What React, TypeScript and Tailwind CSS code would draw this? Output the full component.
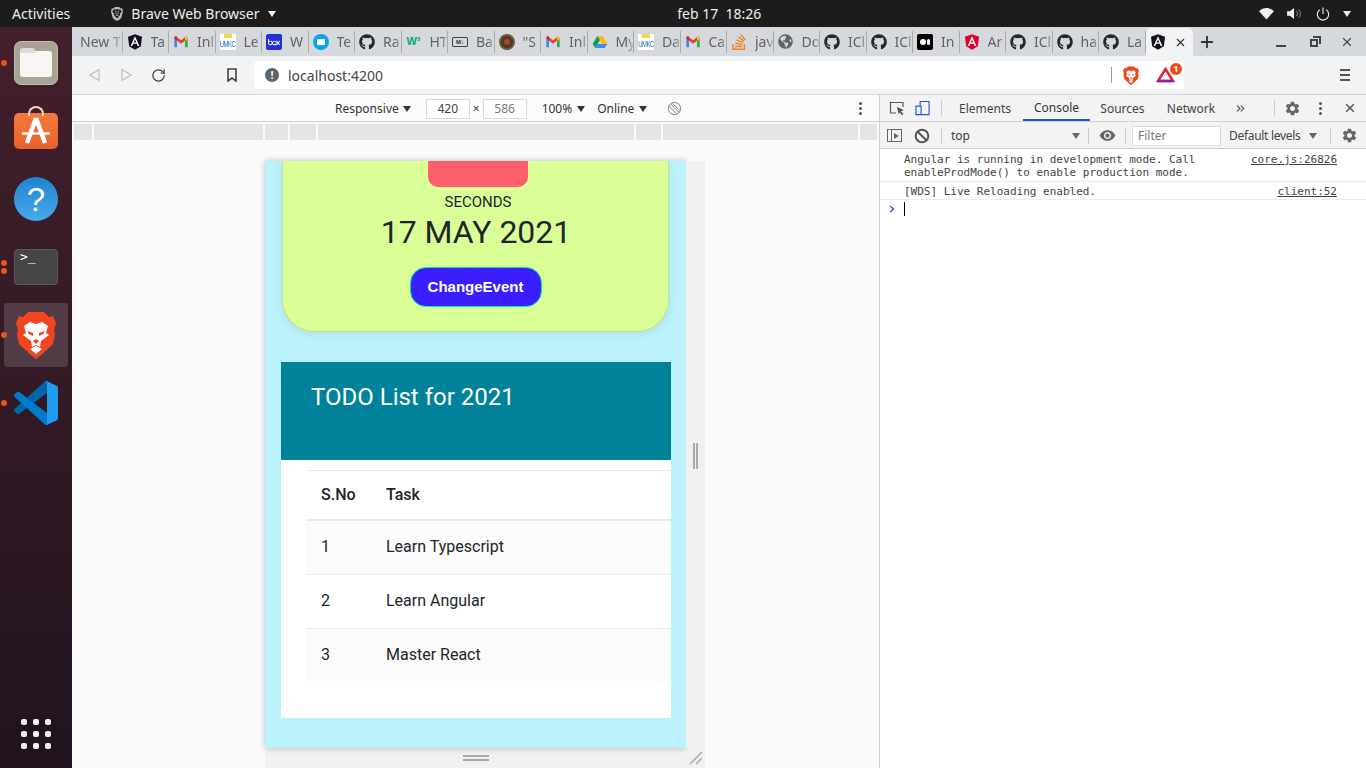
import type { ReactNode } from 'react';
import { FaGithub, FaGlobeAmericas } from 'react-icons/fa';
import { MdSettings, MdRemoveRedEye } from 'react-icons/md';
import { SiBrave, SiStackoverflow, SiBox } from 'react-icons/si';
import { ChevronsRight, Plus, RotateCw, X } from 'lucide-react';

const Caret = ({ className = 'border-t-[#333]' }: { className?: string }) => (
    <span className={`inline-block w-0 h-0 border-x-[4px] border-x-transparent border-t-[6px] ${className}`} />
);

const AngularIcon = ({ red = false }: { red?: boolean }) => (
    <svg viewBox="0 0 24 24" className="w-4 h-4">
        <path d="M12 0.5 1.5 4.2 3.2 18.2 12 23.5 20.8 18.2 22.5 4.2Z" fill={red ? '#dd0031' : '#11131c'} />
        <path d="M12 3.5 5.4 18h2.5l1.3-3.2h5.6l1.3 3.2h2.5ZM13.9 12.8h-3.8L12 8.3Z" fill="#fff" />
    </svg>
);

const GmailIcon = () => (
    <svg viewBox="0 0 24 24" className="w-4 h-4">
        <path d="M2 20h4V10L2 7Z" fill="#4285f4" />
        <path d="M18 20h4V7l-4 3Z" fill="#34a853" />
        <path d="M18 5v5l4-3V5.5C22 3.5 19.8 2.5 18 4Z" fill="#fbbc04" />
        <path d="M6 10V5l6 4.5L18 5v5l-6 4.5Z" fill="#ea4335" />
        <path d="M2 5.5V7l4 3V4C4.200 2.500 2 3.500 2 5.500Z" fill="#c5221f" />
    </svg>
);

const UmkcIcon = () => (
    <div className="w-4 h-4 bg-white flex items-end justify-center relative">
        <span className="absolute top-0 left-1 w-2 h-1 bg-[#f3d64e]" />
        <span className="text-[6px] leading-[8px] tracking-[-0.5px] scale-y-150 origin-bottom text-[#2a6fd0] font-['Liberation_Sans',sans-serif]">UMKC</span>
    </div>
);

const DriveIcon = () => (
    <svg viewBox="0 0 24 24" className="w-4 h-4">
        <path d="M8 3h8l7 12h-8Z" fill="#fbbc04" />
        <path d="M8 3 1 15l4 6 7-12Z" fill="#0f9d58" />
        <path d="M5 21h14l4-6H9Z" fill="#4285f4" />
    </svg>
);

const GithubTabIcon = () => <FaGithub className="w-4 h-4 text-[#24292e]" />;

const tabs: { icon: ReactNode; label: string }[] = [
    { icon: null, label: 'New T' },
    { icon: <AngularIcon />, label: 'Ta' },
    { icon: <GmailIcon />, label: 'Inl' },
    { icon: <UmkcIcon />, label: 'Le' },
    { icon: <div className="w-4 h-4 rounded-[2px] bg-[#2230d8] flex items-center justify-center"><SiBox className="text-white w-3 h-3" /></div>, label: 'W' },
    { icon: <div className="w-4 h-4 rounded-full bg-[#0ca3e8] flex items-center justify-center"><div className="w-2 h-[6px] bg-white rounded-[1px]" /></div>, label: 'Te' },
    { icon: <GithubTabIcon />, label: 'Ra' },
    { icon: <span className="text-[11px] font-bold leading-none text-[#04aa6d] font-['Liberation_Sans',sans-serif]">W³</span>, label: 'HT' },
    { icon: <div className="w-4 h-[10px] border border-[#444] rounded-[1px] flex items-center justify-center text-[6px] font-bold leading-none text-[#333] font-['Liberation_Sans',sans-serif]">M↓</div>, label: 'Ba' },
    { icon: <div className="w-4 h-4 rounded-full bg-[#4b3a22] border-2 border-[#6a5a35] flex items-center justify-center"><div className="w-[6px] h-[6px] rounded-full bg-[#b04030]" /></div>, label: '"S' },
    { icon: <GmailIcon />, label: 'Inl' },
    { icon: <DriveIcon />, label: 'My' },
    { icon: <UmkcIcon />, label: 'Da' },
    { icon: <GmailIcon />, label: 'Ca' },
    { icon: <SiStackoverflow className="w-4 h-4 text-[#f48024]" />, label: 'jav' },
    { icon: <FaGlobeAmericas className="w-[15px] h-[15px] text-[#5f6368]" />, label: 'Do' },
    { icon: <GithubTabIcon />, label: 'ICl' },
    { icon: <GithubTabIcon />, label: 'ICl' },
    { icon: <div className="w-4 h-4 bg-black rounded-[2px] flex items-center justify-center gap-[1px]"><span className="w-[6px] h-[6px] rounded-full bg-white" /><span className="w-[3px] h-[6px] rounded-full bg-white" /></div>, label: 'In' },
    { icon: <AngularIcon red />, label: 'Ar' },
    { icon: <GithubTabIcon />, label: 'ICl' },
    { icon: <GithubTabIcon />, label: 'ha' },
    { icon: <GithubTabIcon />, label: 'La' },
];

const BraveLogo = ({ className }: { className: string }) => (
    <svg viewBox="0 0 40 48" className={className}>
        <path d="M12 1H28L33 6 37 5 40 12 38 19 39 23 37 33 25 44 20 48 15 44 3 33 1 23 2 19 0 12 3 5 7 6Z" fill="#f1451f" />
        <path d="M8 15 14 11 20 13 26 11 32 15 30 22 33 24 25 30 24 36 20 34 16 36 15 30 7 24 10 22Z" fill="#fff" />
        <path d="M14 38 20 35 26 38 20 43Z" fill="#fff" />
        <path d="M11 20 17 22 17 25 13 23ZM29 20 23 22 23 25 27 23ZM17 30 20 28 23 30 20 33Z" fill="#f1451f" />
    </svg>
);

const FilesIcon = () => (
    <div className="w-11 h-11 rounded-[7px] bg-[#a8a395] border border-[#c2bdb0] flex items-center justify-center">
        <div className="relative w-8 h-[26px] mt-[1px] bg-[#f7f6f4] rounded-[3px]">
            <div className="absolute -top-[3px] left-0 w-[15px] h-[5px] bg-[#dedbd4] rounded-t-[3px]" />
        </div>
    </div>
);

const StoreIcon = () => (
    <div className="relative w-11 h-[36px] rounded-[5px] bg-gradient-to-b from-[#f47a3c] to-[#e8602a] flex items-center justify-center">
        <div className="absolute -top-[7px] left-[14px] w-4 h-[10px] border-2 border-b-0 border-[#f0d9b8] rounded-t-full" />
        <svg viewBox="0 0 44 36" className="w-11 h-9">
            <path d="M22 5 13 30M22 5l9 25" stroke="#fff" strokeWidth="4.500" fill="none" />
            <path d="M8 20.500h28" stroke="#fff" strokeWidth="2.500" />
        </svg>
    </div>
);

const HelpIcon = () => (
    <div className="w-11 h-11 rounded-full bg-gradient-to-b from-[#1f83d2] to-[#48aae8] flex items-center justify-center text-white text-[33px] leading-none font-['Liberation_Sans',sans-serif]">
        ?
    </div>
);

const TerminalIcon = () => (
    <div className="w-11 h-9 rounded-[4px] bg-[#454545] border border-[#5a5a5a] px-[5px] text-[13px] leading-[14px] text-white font-['DejaVu_Sans_Mono',monospace]">
        &gt;_
    </div>
);

const VsCodeIcon = () => (
    <svg viewBox="0 0 100 100" className="w-11 h-11">
        <path d="M96.400 10.800 75.900.900c-2.400-1.200-5.200-.700-7.100 1.200L1.400 63.500c-1.800 1.600-1.800 4.400 0 6l5.500 5c1.500 1.300 3.700 1.400 5.300.200L93.200 13.100c2.700-2 6.600-.100 6.600 3.300v-.200c0-2.400-1.400-4.500-3.400-5.400Z" fill="#0065a9" />
        <path d="M96.400 89.200 75.900 99.100c-2.400 1.200-5.200.700-7.100-1.200L1.400 36.300c-1.800-1.600-1.800-4.400 0-6l5.500-5c1.500-1.300 3.700-1.400 5.300-.200L93.200 86.900c2.700 2 6.600.100 6.600-3.300v.200c0 2.400-1.400 4.500-3.400 5.400Z" fill="#007acc" />
        <path d="M75.900 99.100c-2.400 1.200-5.200.700-7.100-1.200 2.300 2.300 6.200.700 6.200-2.600V4.700c0-3.300-3.900-4.900-6.200-2.600 1.900-1.900 4.700-2.400 7.100-1.200l20.500 9.900c2.200 1 3.600 3.100 3.600 5.500v67.800c0 2.400-1.400 4.500-3.600 5.500Z" fill="#1f9cf0" />
    </svg>
);

const dockItems: { icon: ReactNode; dots?: number; active?: boolean }[] = [
    { icon: <FilesIcon />, dots: 1 },
    { icon: <StoreIcon /> },
    { icon: <HelpIcon /> },
    { icon: <TerminalIcon />, dots: 2 },
    { icon: <BraveLogo className="w-10 h-12" />, dots: 1, active: true },
    { icon: <VsCodeIcon />, dots: 1 },
];

const Dock = () => (
    <aside className="w-[72px] shrink-0 flex flex-col items-center px-1 pt-[4px] pb-[19px] gap-1 bg-gradient-to-b from-[#431f2b] to-[#21141f]">
        {dockItems.map((item, i) => (
            <div key={i} className={`relative w-16 h-16 shrink-0 rounded-[3px] flex items-center justify-center ${item.active ? 'bg-white/15' : ''}`}>
                {item.dots && (
                    <div className="absolute -left-[3px] top-0 h-full flex flex-col justify-center gap-[2px]">
                        {Array.from({ length: item.dots }).map((_, d) => (
                            <span key={d} className="w-[6px] h-[6px] rounded-full bg-[#e95420]" />
                        ))}
                    </div>
                )}
                {item.icon}
            </div>
        ))}
        <div className="mt-auto grid grid-cols-3 gap-[6px]">
            {Array.from({ length: 9 }).map((_, i) => (
                <span key={i} className="w-[6px] h-[6px] rounded-[2px] bg-[#f2f2f2]" />
            ))}
        </div>
    </aside>
);

const TopBar = () => (
    <header className="h-[27px] shrink-0 bg-[#1c1c1c] flex items-center text-[14px] text-[#eeeeec] pl-3 pr-[15px]">
        <span>Activities</span>
        <div className="ml-[40px] flex items-center gap-[7px]">
            <SiBrave className="w-[14px] h-4 text-[#b9b9b9]" />
            <span>Brave Web Browser</span>
            <Caret className="border-t-[#eeeeec] ml-[1px]" />
        </div>
        <span className="mx-auto pr-[96px]">feb 17&nbsp; 18:26</span>
        <div className="flex items-center">
            <svg viewBox="0 0 16 14" className="w-[15px] h-[13px]"><path d="M0 4.500C4.500 0 11.500 0 16 4.500L8 13.500Z" fill="#eeeeec" /></svg>
            <svg viewBox="0 0 16 14" className="ml-[13px] w-[15px] h-[13px]">
                <path d="M0 4.500h3L7.500 1V13L3 9.500H0Z" fill="#eeeeec" />
                <path d="M10 4c1.500 1.500 1.500 4.500 0 6M12.500 2.500c2.500 2.500 2.500 6.500 0 9" stroke="#999" fill="none" />
            </svg>
            <svg viewBox="0 0 16 16" className="w-[14px] h-[14px] ml-[14px]">
                <path d="M4.500 3a6.500 6.500 0 1 0 7 0M8 .5V8" stroke="#eeeeec" strokeWidth="1.300" fill="none" />
            </svg>
            <Caret className="border-t-[#eeeeec] ml-[13px]" />
        </div>
    </header>
);

const TabStrip = () => (
    <div className="h-[29px] shrink-0 bg-[#d5d8dc] flex items-stretch pl-1 text-[14px] text-[#5f6368]">
        {tabs.map((tab, i) => (
            <div key={i} className="w-[46.5px] shrink-0 h-[22px] my-auto border-r border-[#a8abb0] pl-[4px] flex items-center gap-[8px] overflow-hidden whitespace-nowrap">
                {tab.icon && <span className="shrink-0 w-4 flex items-center justify-center">{tab.icon}</span>}
                <span className="flex-1 min-w-0 [mask-image:linear-gradient(to_right,#000_65%,rgba(0,0,0,0.25))]">{tab.label}</span>
            </div>
        ))}
        <div className="w-[47px] shrink-0 mt-[1px] bg-[#f2f3f5] rounded-t-[5px] flex items-center pl-[4px] gap-[8px]">
            <AngularIcon />
            <X className="w-[13px] h-[13px] text-[#333]" strokeWidth={2} />
        </div>
        <Plus className="w-[18px] h-[18px] ml-[5px] self-center text-[#333]" strokeWidth={2.500} />
        <div className="ml-auto pr-[12px] flex items-center text-[#444]">
            <span className="w-[10px] h-[2px] bg-[#444] mt-[8px]" />
            <span className="relative ml-[24px] w-[8px] h-[8px] mt-[2px] border-2 border-[#444]">
                <span className="absolute -top-[5px] -right-[5px] w-[8px] h-[8px] border-t-2 border-r-2 border-[#444]" />
            </span>
            <X className="ml-[22px] w-[14px] h-[14px]" strokeWidth={2} />
        </div>
    </div>
);

const AddressBar = () => (
    <div className="h-[39px] shrink-0 bg-[#f2f3f4] border-b border-[#d4d4d4] flex items-start pt-[5px]">
        <div className="w-[182px] h-7 shrink-0 flex items-center pl-[17px]">
            <svg viewBox="0 0 12 14" className="w-[11px] h-[14px]"><path d="M11 1 1 7l10 6Z" fill="none" stroke="#bcbfc3" strokeWidth="1.300" /></svg>
            <svg viewBox="0 0 12 14" className="w-[11px] h-[14px] ml-[21px]"><path d="M1 1l10 6-10 6Z" fill="none" stroke="#bcbfc3" strokeWidth="1.300" /></svg>
            <RotateCw className="w-[15px] h-[15px] ml-[19px] text-[#444]" strokeWidth={2} />
            <svg viewBox="0 0 10 14" className="w-[10px] h-[14px] ml-[61px]"><path d="M1 1h8v12L5 10l-4 3Z" fill="none" stroke="#444" strokeWidth="1.600" /></svg>
        </div>
        <div className="w-[930px] h-7 shrink-0 bg-white rounded-[4px] flex items-center pl-[11px] pr-[9px]">
            <span className="w-[14px] h-[14px] rounded-full bg-[#5f6368] text-white text-[11px] font-bold leading-[14px] text-center font-['Liberation_Sans',sans-serif]">!</span>
            <span className="ml-[9px] text-[14px] text-[#444]">localhost:4200</span>
            <span className="ml-auto w-px h-4 bg-[#999]" />
            <BraveLogo className="w-4 h-[19px] ml-[11px]" />
            <div className="relative ml-[17px] w-[19px] h-[16px]">
                <svg viewBox="0 0 19 16" className="w-[19px] h-[16px]">
                    <path d="M9.500 2 17 14H2Z" fill="none" stroke="#e0243a" strokeWidth="2.500" />
                    <path d="M2 14H17" stroke="#8b1f9e" strokeWidth="2.500" />
                </svg>
                <span className="absolute -top-[4px] -right-[7px] w-3 h-3 rounded-full bg-[#ec4b1b] text-white text-[8px] leading-3 text-center font-bold">1</span>
            </div>
        </div>
        <div className="ml-auto pr-[16px] pt-[8px] flex flex-col gap-[3px]">
            <span className="w-[10px] h-[2px] bg-[#555]" />
            <span className="w-[10px] h-[2px] bg-[#555]" />
            <span className="w-[10px] h-[2px] bg-[#555]" />
        </div>
    </div>
);

const DeviceToolbar = () => (
    <div className="h-[27px] shrink-0 bg-[#fbfbfb] border-b border-[#cfcfcf] flex items-center pl-[263px] pt-[1px] text-[12px] text-[#333]">
        <span>Responsive</span>
        <Caret className="ml-[4px] border-t-[#333]" />
        <span className="ml-[15px] w-[44px] h-[20px] border border-[#dadada] bg-white text-center leading-[18px] text-[#444]">420</span>
        <span className="mx-[3px] text-[#444]">×</span>
        <span className="w-[44px] h-[20px] border border-[#dadada] bg-white text-center leading-[18px] text-[#777]">586</span>
        <span className="ml-[15px]">100%</span>
        <Caret className="ml-[5px] border-t-[#333]" />
        <span className="ml-[12px]">Online</span>
        <Caret className="ml-[5px] border-t-[#333]" />
        <svg viewBox="0 0 16 16" className="ml-[20px] w-[15px] h-[15px]">
            <circle cx="8" cy="8" r="6.500" fill="none" stroke="#777" />
            <path d="M4 3.500l8.500 8.500M2.500 6l7.500 7.500M6 2.500l7.500 7.500" stroke="#777" fill="none" />
        </svg>
        <div className="ml-auto mr-[17px] flex flex-col gap-[2px]">
            <span className="w-[3px] h-[3px] rounded-full bg-[#555]" />
            <span className="w-[3px] h-[3px] rounded-full bg-[#555]" />
            <span className="w-[3px] h-[3px] rounded-full bg-[#555]" />
        </div>
    </div>
);

const rulerWidths = [18, 169, 23, 26, 316, 25, 195, 17];

const MediaRuler = () => (
    <div className="h-[18px] shrink-0 flex gap-[2px] pl-[2px] pt-[2px] bg-[#fafafa]">
        {rulerWidths.map((w, i) => (
            <div key={i} className="h-4 bg-[#e5e5e5]" style={{ width: w }} />
        ))}
    </div>
);

const todos = ['Learn Typescript', 'Learn Angular', 'Master React'];

const CountdownCard = () => (
    <div className="mx-[17px] h-[171px] shrink-0 bg-[#d9ff96] border border-t-0 border-[#c4e08a] rounded-b-[32px] shadow-[0_2px_10px_rgba(0,0,0,0.08)] flex flex-col items-center text-[#212529] font-['Roboto',sans-serif]">
        <div className="ml-[5px] w-[100px] h-[26px] bg-[#ff5e6c] rounded-b-[10px]" />
        <div className="mt-[6px] ml-[5px] text-[15px] leading-[18px]">SECONDS</div>
        <div className="mt-[2px] ml-[1px] text-[32px] leading-[38px]">17 MAY 2021</div>
        <button className="mt-[16px] w-[132px] h-[40px] rounded-[16px] bg-[#3b1eff] border border-[#00f0a0] text-white text-[15px] font-bold font-['Liberation_Sans',sans-serif]">
            ChangeEvent
        </button>
    </div>
);

const TodoCard = () => (
    <div className="ml-[16px] mr-[15px] mt-[30px] h-[356px] shrink-0 bg-white font-['Roboto',sans-serif] text-[#212529]">
        <div className="h-[98px] bg-[#00829b] pl-[30px] pt-[20px] text-[24px] leading-[30px] text-white">TODO List for 2021</div>
        <div className="ml-[25px] mt-[10px] text-[16px]">
            <div className="h-[51px] flex items-center border-t border-b-2 border-[#e9e9e9] font-medium">
                <span className="w-[80px] pl-[15px]">S.No</span>
                <span>Task</span>
            </div>
            {todos.map((todo, i) => (
                <div key={todo} className={`flex items-center pb-[2px] ${i % 2 === 0 ? 'bg-[#fbfbfb]' : 'bg-white'} ${i < 2 ? 'h-[54px] border-b border-[#e9e9e9]' : 'h-[53px]'}`}>
                    <span className="w-[80px] pl-[15px]">{i + 1}</span>
                    <span>{todo}</span>
                </div>
            ))}
        </div>
    </div>
);

const Viewport = () => (
    <div className="flex-1 min-h-0 bg-[#fafafa] pl-[193px] pt-[21px] overflow-hidden">
        <div className="flex w-[440px]">
            <div className="w-[421px] h-[587px] shrink-0 bg-[#bbf2fb] flex flex-col shadow-[0_0_6px_rgba(0,0,0,0.25)] overflow-hidden">
                <CountdownCard />
                <TodoCard />
            </div>
            <div className="w-[19px] bg-[#f1f1f1] flex items-center justify-center gap-[1px] pt-[3px]">
                <span className="w-[2px] h-[26px] bg-[#aaa]" />
                <span className="w-[2px] h-[26px] bg-[#aaa]" />
            </div>
        </div>
        <div className="w-[440px] h-[20px] bg-[#f1f1f1] flex items-center">
            <div className="w-[421px] flex flex-col items-center gap-[2px]">
                <span className="w-[26px] h-[2px] bg-[#aaa]" />
                <span className="w-[26px] h-[2px] bg-[#aaa]" />
            </div>
            <svg viewBox="0 0 14 14" className="ml-[3px] w-[14px] h-[14px]">
                <path d="M1 13 13 1M7 13l6-6" stroke="#aaa" strokeWidth="1.500" />
            </svg>
        </div>
    </div>
);

const DevTools = () => (
    <div className="w-[487px] shrink-0 border-l border-[#cfcfcf] bg-white flex flex-col text-[12px] text-[#333]">
        <div className="h-[27px] shrink-0 bg-[#f3f3f3] border-b border-[#cfcfcf] flex items-center pl-[9px]">
            <svg viewBox="0 0 16 16" className="w-[16px] h-[16px]">
                <path d="M7 13H1.500V2.500H14V7" fill="none" stroke="#555" strokeWidth="1.200" />
                <path d="M8 7l7 3-3 1.200 2.500 2.800-1.300 1.200-2.500-2.800L9.500 14Z" fill="#555" />
            </svg>
            <svg viewBox="0 0 16 16" className="w-[15px] h-[16px] ml-[10px]">
                <path d="M5.500 5V1h9.500v14H5.500M1 6h5.500v9H1Z" fill="none" stroke="#1a56d8" strokeWidth="1.200" />
            </svg>
            <span className="ml-[11px] w-px h-4 bg-[#ccc]" />
            <div className="ml-[5px] flex h-full">
                <span className="w-[76px] pt-[1px] flex items-center justify-center text-[#444]">Elements</span>
                <span className="w-[67px] pt-[1px] flex items-center justify-center border-b-2 border-[#1a56d8] text-[#333]">Console</span>
                <span className="w-[65px] pt-[1px] flex items-center justify-center text-[#444]">Sources</span>
                <span className="w-[72px] pt-[1px] flex items-center justify-center text-[#444]">Network</span>
            </div>
            <ChevronsRight className="ml-[7px] w-[13px] h-[13px] text-[#555]" />
            <span className="ml-[27px] w-px h-4 bg-[#ccc]" />
            <MdSettings className="ml-[9px] w-[17px] h-[17px] text-[#666]" />
            <div className="ml-[18px] flex flex-col gap-[2px]">
                <span className="w-[3px] h-[3px] rounded-full bg-[#555]" />
                <span className="w-[3px] h-[3px] rounded-full bg-[#555]" />
                <span className="w-[3px] h-[3px] rounded-full bg-[#555]" />
            </div>
            <X className="ml-[21px] w-[14px] h-[14px] text-[#555]" strokeWidth={2.500} />
        </div>
        <div className="h-[27px] shrink-0 bg-[#f3f3f3] border-b border-[#cfcfcf] flex items-center pl-[7px] pt-[1px]">
            <div className="w-[15px] h-[13px] border border-[#666] flex items-center">
                <span className="w-[4px] h-full border-r border-[#666]" />
                <span className="ml-[2px] w-0 h-0 border-y-[3.500px] border-y-transparent border-l-[5px] border-l-[#666]" />
            </div>
            <svg viewBox="0 0 16 16" className="ml-[12px] w-4 h-4">
                <circle cx="8" cy="8" r="6.300" fill="none" stroke="#555" strokeWidth="2" />
                <path d="M3.500 3.500l9 9" stroke="#555" strokeWidth="2" />
            </svg>
            <span className="ml-[11px] w-px h-4 bg-[#ccc]" />
            <span className="ml-[9px] w-[121px] text-[#444]">top</span>
            <Caret className="border-t-[#666]" />
            <span className="ml-[8px] w-px h-4 bg-[#ccc]" />
            <MdRemoveRedEye className="ml-[10px] w-[17px] h-[17px] text-[#666]" />
            <span className="ml-[9px] w-px h-4 bg-[#ccc]" />
            <span className="ml-[6px] w-[89px] h-[20px] bg-white border border-[#dcdcdc] pl-[5px] leading-[18px] text-[#777]">Filter</span>
            <span className="ml-[8px] w-[76px] whitespace-nowrap tracking-[-0.3px] text-[#444]">Default levels</span>
            <Caret className="ml-[4px] border-t-[#666]" />
            <span className="ml-[13px] w-px h-4 bg-[#ccc]" />
            <MdSettings className="ml-[10px] w-[17px] h-[17px] text-[#666]" />
        </div>
        <div className="font-['DejaVu_Sans_Mono',monospace] text-[11px] leading-[13px] text-[#444]">
            <div className="h-[33px] pl-[24px] pr-[29px] pt-[4px] border-b border-[#ececec] flex justify-between">
                <span className="w-[300px]">Angular is running in development mode. Call enableProdMode() to enable production mode.</span>
                <span className="underline">core.js:26826</span>
            </div>
            <div className="h-[18px] pl-[24px] pr-[29px] pt-[3px] border-b border-[#ececec] flex justify-between">
                <span>[WDS] Live Reloading enabled.</span>
                <span className="underline">client:52</span>
            </div>
            <div className="h-[18px] pl-[9px] flex items-center">
                <svg viewBox="0 0 6 8" className="w-[6px] h-[8px]"><path d="M1 1l3.500 3L1 7" fill="none" stroke="#3b5bdb" strokeWidth="1.500" /></svg>
                <span className="ml-[9px] w-px h-[14px] bg-black" />
            </div>
        </div>
    </div>
);

const App = () => (
    <div className="w-[1366px] h-[768px] overflow-hidden flex flex-col font-['Noto_Sans','Open_Sans',sans-serif]">
        <TopBar />
        <div className="flex-1 min-h-0 flex">
            <Dock />
            <div className="flex-1 min-w-0 flex flex-col bg-white">
                <TabStrip />
                <AddressBar />
                <div className="flex-1 min-h-0 flex">
                    <div className="flex-1 min-w-0 flex flex-col">
                        <DeviceToolbar />
                        <MediaRuler />
                        <Viewport />
                    </div>
                    <DevTools />
                </div>
            </div>
        </div>
    </div>
);

export default App;
